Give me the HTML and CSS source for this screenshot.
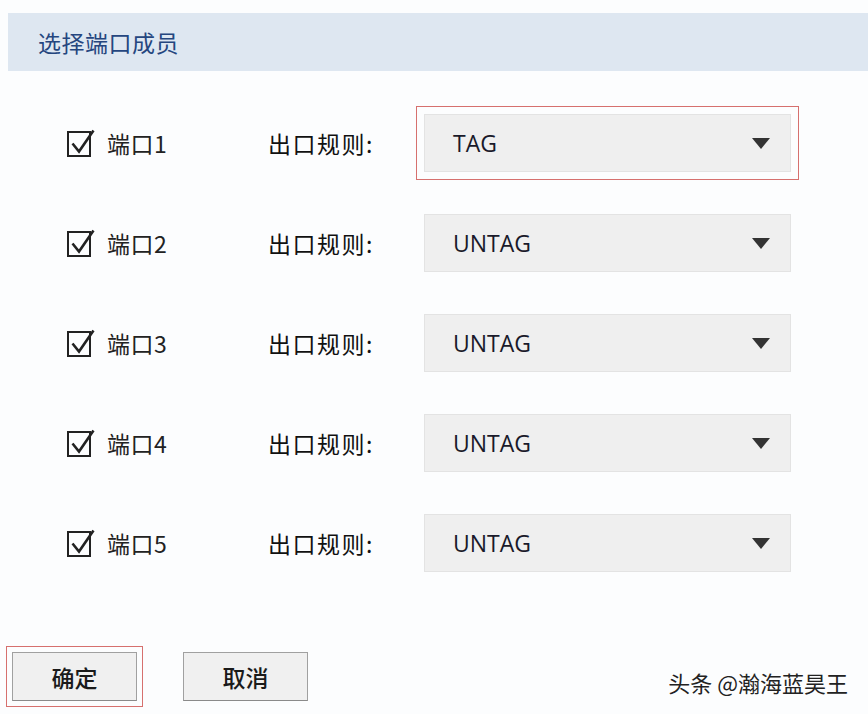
FILE: index.html
```html
<!DOCTYPE html>
<html lang="zh-CN">
<head>
<meta charset="utf-8">
<title>选择端口成员</title>
<link rel="stylesheet" href="styles.css">
</head>
<body>
<div class="page">
  <div class="header">选择端口成员</div>
  <div class="rows">
    <div class="row">
      <svg class="cb" viewBox="0 0 30 31" width="30" height="31"><rect x="2" y="4" width="22" height="24" fill="none" stroke="#222" stroke-width="2"/><path d="M6.5 15.5 L13 23.5 L27.5 2.5" fill="none" stroke="#222" stroke-width="2.6"/></svg>
      <span class="port">端口1</span>
      <span class="rule">出口规则:</span>
      <div class="select hl"><span>TAG</span><i class="arrow"></i></div>
    </div>
    <div class="row">
      <svg class="cb" viewBox="0 0 30 31" width="30" height="31"><rect x="2" y="4" width="22" height="24" fill="none" stroke="#222" stroke-width="2"/><path d="M6.5 15.5 L13 23.5 L27.5 2.5" fill="none" stroke="#222" stroke-width="2.6"/></svg>
      <span class="port">端口2</span>
      <span class="rule">出口规则:</span>
      <div class="select"><span>UNTAG</span><i class="arrow"></i></div>
    </div>
    <div class="row">
      <svg class="cb" viewBox="0 0 30 31" width="30" height="31"><rect x="2" y="4" width="22" height="24" fill="none" stroke="#222" stroke-width="2"/><path d="M6.5 15.5 L13 23.5 L27.5 2.5" fill="none" stroke="#222" stroke-width="2.6"/></svg>
      <span class="port">端口3</span>
      <span class="rule">出口规则:</span>
      <div class="select"><span>UNTAG</span><i class="arrow"></i></div>
    </div>
    <div class="row">
      <svg class="cb" viewBox="0 0 30 31" width="30" height="31"><rect x="2" y="4" width="22" height="24" fill="none" stroke="#222" stroke-width="2"/><path d="M6.5 15.5 L13 23.5 L27.5 2.5" fill="none" stroke="#222" stroke-width="2.6"/></svg>
      <span class="port">端口4</span>
      <span class="rule">出口规则:</span>
      <div class="select"><span>UNTAG</span><i class="arrow"></i></div>
    </div>
    <div class="row">
      <svg class="cb" viewBox="0 0 30 31" width="30" height="31"><rect x="2" y="4" width="22" height="24" fill="none" stroke="#222" stroke-width="2"/><path d="M6.5 15.5 L13 23.5 L27.5 2.5" fill="none" stroke="#222" stroke-width="2.6"/></svg>
      <span class="port">端口5</span>
      <span class="rule">出口规则:</span>
      <div class="select"><span>UNTAG</span><i class="arrow"></i></div>
    </div>
  </div>
  <div class="footer">
    <button class="btn hl-btn">确定</button>
    <button class="btn">取消</button>
    <span class="mark">头条 @瀚海蓝昊王</span>
  </div>
</div>
</body>
</html>
```
FILE: styles.css
```css
html, body {
  margin: 0;
  padding: 0;
  background: #fcfdfe;
}
body {
  font-family: "Noto Sans CJK SC", "Noto Sans", sans-serif;
  color: #222;
  width: 868px;
  height: 714px;
  overflow: hidden;
}
.page {
  display: flex;
  flex-direction: column;
  height: 714px;
}
.header {
  margin: 13px 0 0 8px;
  height: 58px;
  background: #dee7f1;
  padding-left: 30px;
  display: flex;
  align-items: center;
  font-size: 23px;
  color: #25467f;
  letter-spacing: 0.5px;
}
.rows {
  padding-top: 22px;
  display: flex;
  flex-direction: column;
}
.row {
  height: 100px;
  display: flex;
  align-items: center;
  padding-left: 66px;
}
.cb {
  display: block;
  flex: none;
  margin-right: 11px;
}
.port {
  width: 161px;
  font-size: 23px;
  letter-spacing: 0.5px;
  color: #222;
}
.rule {
  width: 156px;
  font-size: 23px;
  letter-spacing: 1.5px;
  color: #111;
}
.select {
  box-sizing: border-box;
  width: 367px;
  height: 58px;
  background: #efefef;
  border: 1px solid #e3e3e3;
  display: flex;
  align-items: center;
  justify-content: space-between;
  padding: 0 20px 0 28px;
  font-family: "Open Sans", "Noto Sans", sans-serif;
  font-size: 23px;
  color: #1a1a2a;
}
.select.hl {
  outline: 1.5px solid #d6706e;
  outline-offset: 7px;
}
.arrow {
  display: block;
  width: 0;
  height: 0;
  border-left: 9px solid transparent;
  border-right: 9px solid transparent;
  border-top: 11px solid #333;
}
.footer {
  display: flex;
  align-items: center;
  padding: 59px 0 0 12px;
}
.btn {
  box-sizing: border-box;
  width: 125px;
  height: 49px;
  background: #f0f0f0;
  border: 1px solid #a0a0a0;
  border-bottom-color: #8a8a8a;
  font-family: "Noto Sans CJK SC", sans-serif;
  font-size: 23px;
  font-weight: 500;
  color: #1a1a1a;
  margin-right: 46px;
  padding: 0;
}
.btn.hl-btn {
  outline: 1.5px solid #d6706e;
  outline-offset: 5px;
}
.mark {
  margin-left: auto;
  margin-right: 20px;
  margin-top: 10px;
  font-size: 22px;
  color: #222;
}
```
